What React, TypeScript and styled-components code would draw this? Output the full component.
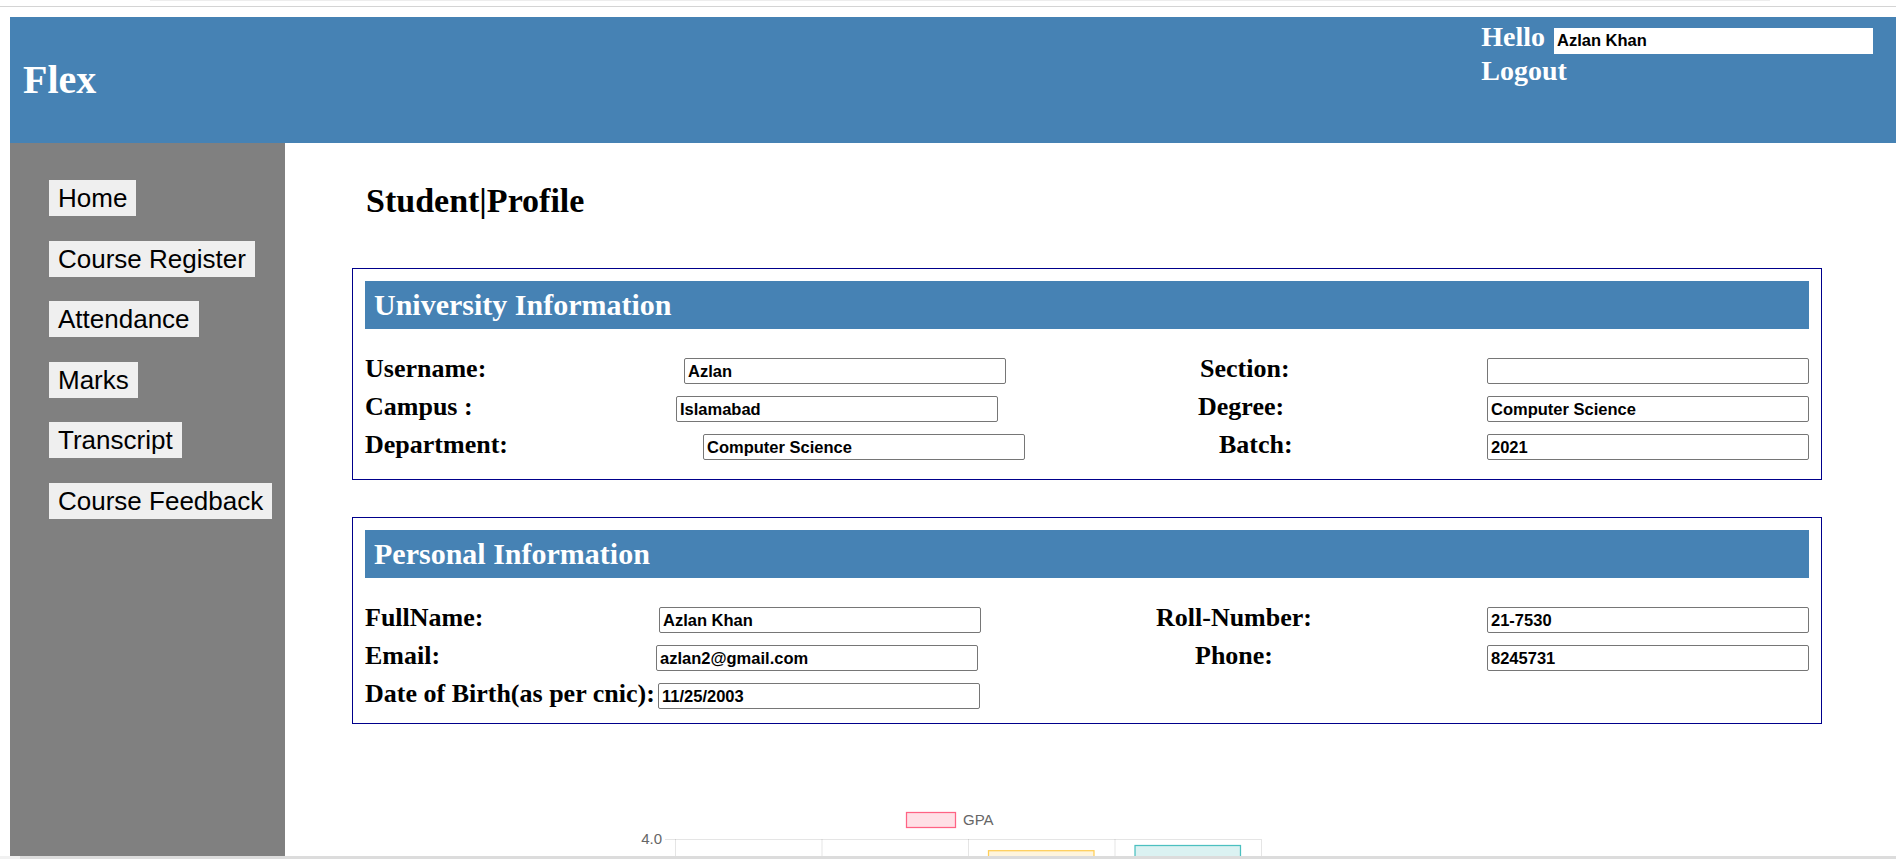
import React from "react";
import styled, { createGlobalStyle } from "styled-components";

const GlobalStyle = createGlobalStyle`
  html, body {
    margin: 0;
    padding: 0;
    background: #ffffff;
  }
  body {
    font-family: "Liberation Serif", "Times New Roman", serif;
  }
  *, *::before, *::after {
    box-sizing: border-box;
  }
`;

const Page = styled.div`
  position: relative;
  width: 1896px;
  height: 859px;
  overflow: hidden;
  display: flex;
  flex-direction: column;
`;

const TopBar = styled.div`
  height: 17px;
  flex: none;
`;

const FaintRule = styled.div`
  height: 1px;
  margin: 0 126px 0 150px;
  background: #ededed;
`;

const Rule = styled.div`
  height: 1px;
  margin-top: 5px;
  background: #d4d4d4;
`;

const Header = styled.header`
  flex: none;
  height: 126px;
  margin-left: 10px;
  background: #4682b4;
  display: flex;
  justify-content: space-between;
  align-items: flex-start;
`;

const Logo = styled.h1`
  align-self: center;
  margin: 0;
  padding-left: 13px;
  font-size: 40px;
  line-height: 40px;
  font-weight: 700;
  color: #ffffff;
`;

const UserPanel = styled.div`
  display: flex;
  flex-direction: column;
  padding: 3px 23px 0 0;
`;

const HelloRow = styled.div`
  display: flex;
  align-items: baseline;
  gap: 9px;
`;

const HeaderText = styled.span`
  font-size: 28px;
  line-height: 34px;
  font-weight: 700;
  color: #ffffff;
`;

const NameInput = styled.input`
  width: 319px;
  height: 26px;
  border: none;
  padding: 0 3px;
  background: #ffffff;
  color: #000000;
  font-family: "Liberation Sans", Arial, sans-serif;
  font-weight: 700;
  font-size: 16.5px;
  outline: none;
`;

const Body = styled.div`
  flex: 1;
  display: flex;
  margin-left: 10px;
  min-height: 0;
`;

const Sidebar = styled.nav`
  flex: none;
  width: 275px;
  background: #808080;
  padding: 37px 0 0 39px;
  display: flex;
  flex-direction: column;
  align-items: flex-start;
  gap: 24.6px;
`;

const NavButton = styled.button`
  border: none;
  border-radius: 0;
  background: #efefef;
  color: #000000;
  font-family: "Liberation Sans", Arial, sans-serif;
  font-size: 26px;
  line-height: 30px;
  padding: 3px 9px;
  cursor: pointer;
  white-space: nowrap;
`;

const Main = styled.main`
  flex: 1;
  padding-top: 38px;
  display: flex;
  flex-direction: column;
`;

const Title = styled.h2`
  margin: 0 0 0 81px;
  font-size: 34px;
  line-height: 40px;
  font-weight: 700;
  color: #000000;
`;

const InfoBox = styled.section<{ $mt: number; $pb: number }>`
  margin: ${(p) => p.$mt}px 74px 0 67px;
  border: 1px solid #00008b;
  padding: 12px 12px ${(p) => p.$pb}px;
`;

const SectionHead = styled.h3`
  margin: 0;
  height: 48px;
  padding-left: 9px;
  background: #4682b4;
  color: #ffffff;
  font-size: 30px;
  line-height: 48px;
  font-weight: 700;
`;

const Rows = styled.div`
  margin-top: 29px;
  display: flex;
  flex-direction: column;
  gap: 12px;
`;

const Row = styled.div`
  display: flex;
  align-items: baseline;
  height: 26px;
`;

const Label = styled.label<{ $w: number; $ml?: number }>`
  flex: none;
  width: ${(p) => p.$w}px;
  margin-left: ${(p) => p.$ml ?? 0}px;
  font-size: 26px;
  line-height: 19px;
  font-weight: 700;
  color: #000000;
  white-space: nowrap;
`;

const FieldInput = styled.input`
  flex: none;
  width: 322px;
  height: 26px;
  border: 1px solid #767676;
  border-radius: 2px;
  padding: 0 3px;
  background: #ffffff;
  color: #000000;
  font-family: "Liberation Sans", Arial, sans-serif;
  font-weight: 700;
  font-size: 16.5px;
  outline: none;
`;

const ChartWrap = styled.div`
  margin: 70px 0 0 345px;
  width: 640px;
  height: 64px;
  flex: none;
`;

const ScrollTrack = styled.div`
  position: absolute;
  left: 0;
  right: 0;
  bottom: 0;
  height: 3px;
  background: linear-gradient(to right, #f1f1f1 0 20px, #dcdcdc 20px);
`;

type Field = { label: string; value: string; x: number };
type InfoRow = { left: Field; right?: Field };

const ROW_START = 365;
const INPUT_W = 322;
const RIGHT_INPUT = 1487;

const university: InfoRow[] = [
  { left: { label: "Username:", value: "Azlan", x: 684 }, right: { label: "Section:", value: "", x: 1200 } },
  { left: { label: "Campus :", value: "Islamabad", x: 676 }, right: { label: "Degree:", value: "Computer Science", x: 1198 } },
  { left: { label: "Department:", value: "Computer Science", x: 703 }, right: { label: "Batch:", value: "2021", x: 1219 } },
];

const personal: InfoRow[] = [
  { left: { label: "FullName:", value: "Azlan Khan", x: 659 }, right: { label: "Roll-Number:", value: "21-7530", x: 1156 } },
  { left: { label: "Email:", value: "azlan2@gmail.com", x: 656 }, right: { label: "Phone:", value: "8245731", x: 1195 } },
  { left: { label: "Date of Birth(as per cnic):", value: "11/25/2003", x: 658 } },
];

const navItems = ["Home", "Course Register", "Attendance", "Marks", "Transcript", "Course Feedback"];

function InfoRows({ rows }: { rows: InfoRow[] }) {
  return (
    <Rows>
      {rows.map((r) => {
        const leftEnd = r.left.x + INPUT_W;
        return (
          <Row key={r.left.label}>
            <Label $w={r.left.x - ROW_START}>{r.left.label}</Label>
            <FieldInput readOnly value={r.left.value} />
            {r.right && (
              <>
                <Label $ml={r.right.x - leftEnd} $w={RIGHT_INPUT - r.right.x}>
                  {r.right.label}
                </Label>
                <FieldInput readOnly value={r.right.value} />
              </>
            )}
          </Row>
        );
      })}
    </Rows>
  );
}

const bars = [
  { value: 3.2, color: "255,99,132" },
  { value: 3.45, color: "54,162,235" },
  { value: 3.82, color: "255,206,86" },
  { value: 3.9, color: "75,192,192" },
];

const CHART_H = 64;

function GpaChart() {
  const left = 45;
  const right = 631;
  const top = 45;
  const bottom = 305;
  const max = 4;
  const yOf = (v: number) => bottom - (v / max) * (bottom - top);
  const cat = (right - left) / bars.length;
  const bw = cat * 0.72;
  const ticks = [4, 3.5, 3, 2.5, 2, 1.5, 1, 0.5, 0];
  const grid = "rgba(0,0,0,0.1)";
  const visibleTicks = ticks.filter((t) => yOf(t) + 6 < CHART_H);
  return (
    <svg width="640" height={CHART_H} viewBox={`0 0 640 ${CHART_H}`}>
      <rect x="276.5" y="18.5" width="49" height="15" fill="rgba(255,99,132,0.2)" stroke="rgb(255,99,132)" strokeWidth="1.25" />
      <text x="333" y="30.5" fontFamily="Liberation Sans, Arial, sans-serif" fontSize="15" fill="#666">
        GPA
      </text>
      {visibleTicks.map((t) => (
        <g key={t}>
          <line x1="35" x2={right} y1={yOf(t) + 0.5} y2={yOf(t) + 0.5} stroke={grid} strokeWidth="1" />
          <text x="32" y={yOf(t) + 5} textAnchor="end" fontFamily="Liberation Sans, Arial, sans-serif" fontSize="15" fill="#666">
            {t.toFixed(1)}
          </text>
        </g>
      ))}
      {[0, 1, 2, 3, 4].map((i) => (
        <line key={i} x1={left + i * cat + 0.5} x2={left + i * cat + 0.5} y1={top} y2={bottom + 10} stroke={grid} strokeWidth="1" />
      ))}
      {bars.map((b, i) => {
        const x = left + i * cat + (cat - bw) / 2;
        const y = yOf(b.value);
        return (
          <rect
            key={i}
            x={x}
            y={y}
            width={bw}
            height={bottom - y}
            fill={`rgba(${b.color},0.2)`}
            stroke={`rgb(${b.color})`}
            strokeWidth="1.25"
          />
        );
      })}
    </svg>
  );
}

export default function App() {
  return (
    <>
      <GlobalStyle />
      <Page>
        <TopBar>
          <FaintRule />
          <Rule />
        </TopBar>
        <Header>
          <Logo>Flex</Logo>
          <UserPanel>
            <HelloRow>
              <HeaderText>Hello</HeaderText>
              <NameInput readOnly value="Azlan Khan" />
            </HelloRow>
            <HeaderText>Logout</HeaderText>
          </UserPanel>
        </Header>
        <Body>
          <Sidebar>
            {navItems.map((n) => (
              <NavButton key={n}>{n}</NavButton>
            ))}
          </Sidebar>
          <Main>
            <Title>Student|Profile</Title>
            <InfoBox $mt={47} $pb={19}>
              <SectionHead>University Information</SectionHead>
              <InfoRows rows={university} />
            </InfoBox>
            <InfoBox $mt={37} $pb={14}>
              <SectionHead>Personal Information</SectionHead>
              <InfoRows rows={personal} />
            </InfoBox>
            <ChartWrap>
              <GpaChart />
            </ChartWrap>
          </Main>
        </Body>
        <ScrollTrack />
      </Page>
    </>
  );
}
